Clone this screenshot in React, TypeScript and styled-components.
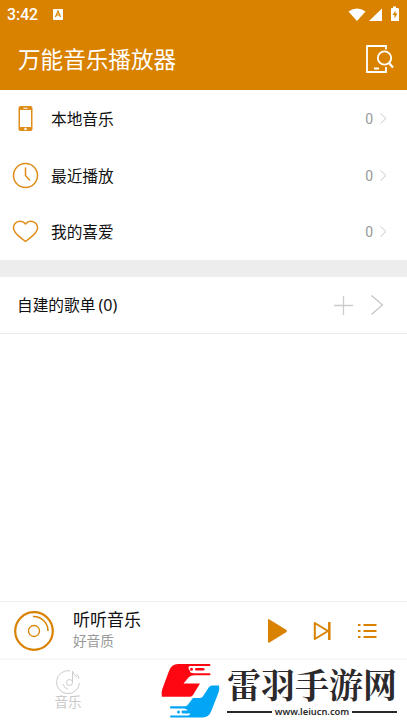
import React from "react";
import styled, { createGlobalStyle } from "styled-components";

const ORANGE = "#d98200";

const GlobalStyle = createGlobalStyle`
  * { box-sizing: border-box; }
  body { margin: 0; background: #fff; font-family: Roboto, "Noto Sans CJK SC", sans-serif; overflow: hidden; }
  svg { display: block; flex: none; overflow: visible; }
`;
const Screen = styled.main`
  width: 407px; height: 723px; display: flex; flex-direction: column; color: #111; white-space: nowrap;
`;
const StatusBar = styled.div`
  height: 28px; display: flex; align-items: center; padding: 0 7px; background: ${ORANGE}; color: #fff;
`;
const Clock = styled.span`
  padding-top: 1px; font-size: 15.8px; font-weight: 500; line-height: 28px; width: 46px;
`;
const StatusIcons = styled.div`
  margin-left: auto; display: flex; align-items: center;
`;
const Header = styled.header`
  height: 62px; display: flex; align-items: center; justify-content: space-between;
  padding: 0 13px 0 18px; background: ${ORANGE}; color: #fff;
`;
const Title = styled.h1`
  margin: 0; font-family: "Noto Sans CJK SC", sans-serif; font-size: 22.6px; font-weight: 400; line-height: 60px;
`;
const Library = styled.section`
  height: 170px; padding-top: 0.5px; display: grid; grid-template-rows: repeat(3, 56.4px);
`;
const Row = styled.div`
  display: flex; align-items: center; padding: 0 20px 0 12px;
`;
const RowLabel = styled.span`
  margin-left: 12px; font-family: "Noto Sans CJK SC", sans-serif; font-size: 15.7px; color: #111;
`;
const Count = styled.span`
  margin: 1px 7px 0 auto; font-size: 14px; color: #999;
`;
const Divider = styled.div`
  height: 17px; background: #ededed;
`;
const PlaylistBar = styled.div`
  height: 57px; display: flex; align-items: center; padding: 0 24px 0 17px; border-bottom: 1px solid #eaeaea;
`;
const PlaylistTitle = styled.span`
  flex: 1; padding-bottom: 1px; font-family: "Noto Sans CJK SC", sans-serif; font-size: 15.7px;
`;
const PlaylistCount = styled.span`
  margin-left: 3px; font-family: "Noto Sans", sans-serif; font-size: 16px;
`;
const Empty = styled.div`
  flex: 1;
`;
const Player = styled.section`
  height: 59px; display: flex; align-items: center; padding: 1px 30px 0 14px;
  border-top: 1px solid #f0f0f0; border-bottom: 2px solid #f7f7f7;
`;
const Track = styled.div`
  margin-left: 19px; padding-bottom: 4px; flex: 1; font-family: "Noto Sans CJK SC", sans-serif;
`;
const Song = styled.div`
  font-size: 17px; line-height: 22px;
`;
const Artist = styled.div`
  font-size: 13.6px; line-height: 20px; color: #999;
`;
const Controls = styled.div`
  display: flex; align-items: center; gap: 26px;
`;
const BottomBar = styled.nav`
  height: 63px; display: flex;
`;
const Tab = styled.div`
  width: 136px; padding-top: 10px; display: flex; flex-direction: column; align-items: center;
  color: #c8c8c8; font: 13.5px/15px "Noto Sans CJK SC", sans-serif;
`;
const Brand = styled.div`
  display: flex; padding: 2px 0 0 24px;
`;
const BrandText = styled.div`
  margin-left: 7px; width: 170px; color: #2b292b;
`;
const BrandName = styled.div`
  height: 45px; font: 700 34px/43px "Noto Serif CJK SC", "Noto Sans CJK SC", serif;
`;
const BrandSite = styled.div`
  display: flex; align-items: center; gap: 3px; font: 600 9.3px/10px "Noto Sans", sans-serif;
`;
const Rule = styled.span`
  flex: 1; height: 2px; background: #2b292b;
`;

function Chevron({ large = false }: { large?: boolean }) {
  return large ? (
    <svg width="12" height="20" fill="none" stroke="#c4c4c4" strokeWidth="1.2"><path d="M.5.5 11.5 10 .5 19.5" /></svg>
  ) : (
    <svg width="7" height="11" fill="none" stroke="#ccc"><path d="M.5.5 6 5.5.5 10.5" /></svg>
  );
}

function PhoneIcon() {
  return (
    <svg width="27" height="27" viewBox="0 0 27 27">
      <path fill="#df8d19" fillRule="evenodd" d="M8.5 1h10Q20.500 1 20.500 3v21q0 2-2 2h-10q-2 0-2-2V3q0-2 2-2ZM8 5v17h11V5ZM11.500 2.700v1h4v-1ZM13.500 22.800a1.200 1.200 0 1 0 0 2.400 1.200 1.200 0 0 0 0-2.400Z" />
    </svg>
  );
}
function ClockIcon() {
  return (
    <svg width="27" height="27" viewBox="0 0 27 27" fill="none" stroke="#df8d19" strokeWidth="1.500">
      <circle cx="13.500" cy="13.500" r="12" /><path d="M13.500 6v7.500l4 4.500" strokeLinecap="round" />
    </svg>
  );
}
function HeartIcon() {
  return (
    <svg width="27" height="27" viewBox="0 0 27 27" fill="none" stroke="#df8d19" strokeWidth="1.500" strokeLinejoin="round">
      <path d="M13.500 6C10.500 2 5.500 2.800 3 5.500.6 8.500 1.400 12 3.500 14.700Q6 17.800 13.500 23.500 21 17.800 23.500 14.700C25.600 12 26.400 8.500 24 5.500 21.500 2.800 16.500 2 13.500 6Z" />
    </svg>
  );
}
function BrandMark() {
  return (
    <svg width="60" height="56">
      <g fill="#ff0712">
        <path d="M18 2H49.500a.9.900 0 0 1 0 1.900H30q-1.500 0-1.500 1.700T30 9q0 2.200 4 2.200H49.500a.9.900 0 0 1 0 2H34.500q-4 0-6 2.200L23.500 21.500H40L33 33q-1 1.700-3 1.700H1.800Q1 30 2.500 26.500L9 9Q11.500 2 18 2Z" />
        <circle cx="31.500" cy="7.300" r="1.500" /><rect x="35" y="5.900" width="9.500" height="2.700" rx="1.300" />
      </g>
      <g fill="#03a5f5">
        <path d="M52 23.500h7q.8 3.500-.5 7L51.500 48.500Q49 55.500 42.500 55.500H11a.9.900 0 0 1 0-1.900H28q2-.3 2-1.800T28 49q-1-2.500-4-2.500H11a1 1 0 0 1 0-2.200H25q2 0 3-1.700L33 36h7q2 0 3-1.700L49 25q1-1.500 3-1.500Z" />
        <circle cx="18.500" cy="50" r="1.500" /><rect x="21.500" y="48.600" width="9" height="2.800" rx="1.400" />
      </g>
    </svg>
  );
}

const rows = [
  { label: "本地音乐", icon: <PhoneIcon /> },
  { label: "最近播放", icon: <ClockIcon /> },
  { label: "我的喜爱", icon: <HeartIcon /> },
];

export default function App() {
  return (
    <Screen>
      <GlobalStyle />
      <StatusBar>
        <Clock>3:42</Clock>
        <svg width="10" height="11"><rect width="10" height="11" rx="1" fill="#fff" /><path d="m2.500 8 2.500-6 2.500 6M3.500 6h3" fill="none" stroke={ORANGE} strokeWidth="1.200" /></svg>
        <StatusIcons>
          <svg width="52" height="14" fill="#fff">
            <path d="M.5 4.500Q9 -1.500 17.500 4.500L9 14Z" /><path d="M34 1.500v12.500H21Z" />
            <path d="M45 -.5h3V1h2q1 0 1 1V14h-8V2q0-1 1-1h1Z" /><path fill={ORANGE} d="m47.500 3.500-3 4.500h2v3.500l3-5h-2Z" />
          </svg>
        </StatusIcons>
      </StatusBar>
      <Header>
        <Title>万能音乐播放器</Title>
        <svg width="28" height="28" fill="none" stroke="#fff" strokeWidth="1.800">
          <path d="M20 4.500V1H1v26h19v-5M8 23.500h5" /><circle cx="18.500" cy="13" r="6.700" /><path d="m23 18 4 4.500" strokeWidth="2.200" />
        </svg>
      </Header>
      <Library>
        {rows.map((r) => (
          <Row key={r.label}>{r.icon}<RowLabel>{r.label}</RowLabel><Count>0</Count><Chevron /></Row>
        ))}
      </Library>
      <Divider />
      <PlaylistBar>
        <PlaylistTitle>自建的歌单<PlaylistCount>(0)</PlaylistCount></PlaylistTitle>
        <svg width="37" height="19" stroke="#ccc" strokeWidth="1.300"><path d="M0 9.500h19M9.500 0v19" /></svg>
        <Chevron large />
      </PlaylistBar>
      <Empty />
      <Player>
        <svg width="40" height="40" fill="none" stroke={ORANGE}>
          <circle cx="20" cy="20" r="18.800" strokeWidth="2.200" /><circle cx="20" cy="20" r="5.500" strokeWidth="1.300" />
          <path d="M19 5.500A14.500 14.500 0 0 1 34 20" strokeWidth="1.500" />
        </svg>
        <Track><Song>听听音乐</Song><Artist>好音质</Artist></Track>
        <Controls>
          <svg width="20" height="24" fill={ORANGE}><path d="M0 1Q0-.5 1.500.5L18.500 11q1 1 0 2L1.500 23.500Q0 24 0 23Z" /></svg>
          <svg width="18" height="18" fill="none" stroke={ORANGE} strokeWidth="2" strokeLinejoin="round"><path d="M.8 1v16L14 9Z" /><path d="M15.300 0v18" strokeWidth="2.500" /></svg>
          <svg width="19" height="16" stroke={ORANGE} strokeWidth="2"><path d="M0 2h2.500M5.500 2H18.500M0 8h2.500M5.500 8H18.500M0 14h2.500M5.500 14H18.500" /></svg>
        </Controls>
      </Player>
      <BottomBar>
        <Tab>
          <svg width="24" height="24" fill="none" stroke="#ccc">
            <path d="M14 .800A11.500 11.500 0 1 0 23.500 13M20.500 4q2 2 2.500 5M16.500 12V1q.8 4 4.500 6" /><circle cx="13.500" cy="12.500" r="3" /><path d="M7 14q1 4 5 5" />
          </svg>
          音乐
        </Tab>
        <Brand>
          <BrandMark />
          <BrandText><BrandName>雷羽手游网</BrandName><BrandSite><Rule />www.leiucn.com<Rule /></BrandSite></BrandText>
        </Brand>
      </BottomBar>
    </Screen>
  );
}
